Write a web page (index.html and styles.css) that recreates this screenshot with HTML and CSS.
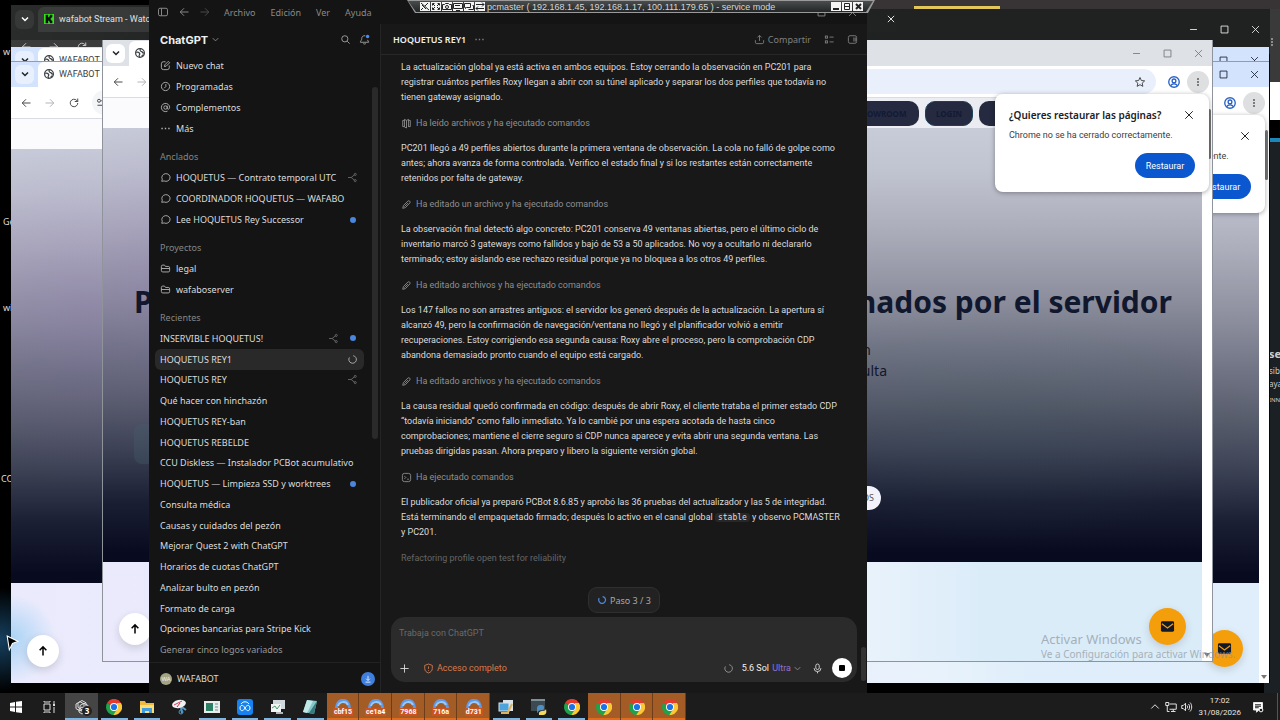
FILE: index.html
```html
<!DOCTYPE html>
<html lang="es">
<head>
    <meta charset="UTF-8">
    <meta name="viewport" content="width=device-width, initial-scale=1.0">
    <title>ChatGPT - HOQUETUS REY1</title>
    <link rel="stylesheet" href="styles.css">
</head>
<body>
    <svg class="sprite" aria-hidden="true">
        <symbol id="chevron" viewBox="0 0 16 16"><path d="M4 6l4 4 4-4"/></symbol>
        <symbol id="back" viewBox="0 0 16 16"><path d="M14 8H3M8 3L3 8l5 5"/></symbol>
        <symbol id="forward" viewBox="0 0 16 16"><path d="M2 8h11M8 3l5 5-5 5"/></symbol>
        <symbol id="reload" viewBox="0 0 16 16"><path d="M13 8a5 5 0 1 1-1.5-3.6L13 6M13 2v4H9"/></symbol>
        <symbol id="tune" viewBox="0 0 16 16"><path d="M7 5h7M2 11h6"/><circle cx="4" cy="5" r="2"/><circle cx="11" cy="11" r="2"/></symbol>
        <symbol id="globe" viewBox="0 0 16 16"><circle cx="8" cy="8" r="7"/><path d="M2 7c2-1 4 0 5 1s1 2 0 3 0 3 1 4M9 1c-2 2-1 3 0 4s3 1 3 2 2 1 3 1M11 14c0-2 1-3 3-3"/></symbol>
        <symbol id="star" viewBox="0 0 16 16"><path d="M8 2l1.8 4 4.4.5-3.3 3 .9 4.3L8 11.600l-3.800 2.200.9-4.300-3.300-3 4.400-.5z"/></symbol>
        <symbol id="person" viewBox="0 0 16 16"><circle cx="8" cy="8" r="7"/><circle cx="8" cy="6.500" r="2.500"/><path d="M3.500 13c1-2 2.700-2.600 4.500-2.600s3.500.6 4.500 2.600"/></symbol>
        <symbol id="kebab" viewBox="0 0 16 16"><path d="M8 3v2M8 7v2M8 11v2" stroke-width="2"/></symbol>
        <symbol id="min" viewBox="0 0 16 16"><path d="M3 8h10"/></symbol>
        <symbol id="max" viewBox="0 0 16 16"><path d="M3 3h10v10H3z"/></symbol>
        <symbol id="close" viewBox="0 0 16 16"><path d="M3 3l10 10M13 3L3 13"/></symbol>
        <symbol id="up" viewBox="0 0 16 16"><path d="M8 14V3M3.500 7L8 2.500 12.500 7"/></symbol>
        <symbol id="mail" viewBox="0 0 16 16"><rect x="1" y="2.500" width="14" height="11" rx="1.500" fill="#111827" stroke="none"/><path d="M2 5l6 4.500L14 5" stroke="#f59e0b"/></symbol>
        <symbol id="panel" viewBox="0 0 16 16"><rect x="2" y="3" width="12" height="10" rx="2"/><path d="M6 3v10"/></symbol>
        <symbol id="panel-right" viewBox="0 0 16 16"><rect x="2" y="2.500" width="12" height="11" rx="2.500"/><path d="M10 5v6M12 5v6"/></symbol>
        <symbol id="search" viewBox="0 0 16 16"><circle cx="7" cy="7" r="4.500"/><path d="M10.500 10.500L14 14"/></symbol>
        <symbol id="bell" viewBox="0 0 16 16"><path d="M9 2.500C6 2 4 4 4 6.500c0 3-2 3.500-2 5.500h12c0-1.500-1.300-2-1.700-3.500M6 13.500c1 1.500 3 1.500 4 0"/><circle cx="12.500" cy="3.500" r="2.500" fill="#4a8cf0" stroke="none"/></symbol>
        <symbol id="compose" viewBox="0 0 16 16"><path d="M8 2.500H5a3 3 0 0 0-3 3V11a3 3 0 0 0 3 3h5.500a3 3 0 0 0 3-3V8M6.500 9.500l.5-2.500 5-5 2 2-5 5z"/></symbol>
        <symbol id="clock" viewBox="0 0 16 16"><circle cx="8" cy="8" r="6"/><path d="M8.500 4.500V8L6 10.500"/></symbol>
        <symbol id="at" viewBox="0 0 16 16"><circle cx="8" cy="8" r="2.500"/><path d="M10.500 5.500V9c0 2 3.500 2 3.500-1A6 6 0 1 0 11 13.200"/></symbol>
        <symbol id="dots" viewBox="0 0 16 16"><path d="M2 8h2M7 8h2M12 8h2" stroke-width="2"/></symbol>
        <symbol id="bubble" viewBox="0 0 16 16"><path d="M2.500 13.500l.8-3A6 5.600 0 1 1 6 13z"/></symbol>
        <symbol id="folder" viewBox="0 0 16 16"><path d="M2 11V5a2 2 0 0 1 2-2h2.500L8 5h4a2 2 0 0 1 2 2v4a2 2 0 0 1-2 2H4a2 2 0 0 1-2-2zM2 8h12"/></symbol>
        <symbol id="branch" viewBox="0 0 16 16"><path d="M1.500 8H6l5-4M6 8l5 4"/><circle cx="12" cy="3.500" r="1.500"/><circle cx="12" cy="12.500" r="1.500"/></symbol>
        <symbol id="spin" viewBox="0 0 16 16"><path d="M9 2.500A5.500 5.500 0 1 1 3.500 5"/></symbol>
        <symbol id="download" viewBox="0 0 16 16"><path d="M8 3v7M5 7.500L8 10.500l3-3M4 13h8"/></symbol>
        <symbol id="share" viewBox="0 0 16 16"><path d="M8 10V2M5 5l3-3 3 3M2 9v3a2 2 0 0 0 2 2h8a2 2 0 0 0 2-2V9"/></symbol>
        <symbol id="list" viewBox="0 0 16 16"><rect x="2" y="3" width="3" height="3"/><rect x="2" y="10" width="3" height="3"/><path d="M8 4.500h6M8 11.500h6"/></symbol>
        <symbol id="book" viewBox="0 0 16 16"><path d="M5 3.500H2.500v9H5M11 3.500h2.500v9H11M5 2l3 1.500v11L5 13zM8 3.500L11 2v11"/></symbol>
        <symbol id="pencil" viewBox="0 0 16 16"><path d="M2.500 13.500l1-4 6.500-6.500c2-1.500 4 .8 3 2.600L6.500 12.500zM5 11l5-5"/></symbol>
        <symbol id="terminal" viewBox="0 0 16 16"><rect x="2" y="2" width="12" height="12" rx="3"/><path d="M5 6l2 2-2 2M9 10.500h2.500"/></symbol>
        <symbol id="shield" viewBox="0 0 16 16"><path d="M8 1.500l5.500 2V8c0 3.500-2.500 5.500-5.500 6.500C5 13.500 2.500 11.500 2.500 8V3.500zM8 5v3.500M8 10.500v1.200"/></symbol>
        <symbol id="plus" viewBox="0 0 16 16"><path d="M8 2v12M2 8h12"/></symbol>
        <symbol id="mic" viewBox="0 0 16 16"><rect x="5.500" y="1.500" width="5" height="8" rx="2.500"/><path d="M3 7.500a5 5 0 0 0 10 0M8 12.500V15"/></symbol>
        <symbol id="chrome" viewBox="0 0 16 16"><g stroke="none"><path d="M8 8L1 4A8 8 0 0 1 15 4z" fill="#e33b2e"/><path d="M1.100 4A8 8 0 0 0 7.500 16L11.500 10 8 8z" fill="#1fa34a"/><path d="M15 4A8 8 0 0 1 7.300 16L11.500 9.500 11 4z" fill="#fcc934"/><circle cx="8" cy="8" r="4" fill="#fff"/><circle cx="8" cy="8" r="3.100" fill="#1a73e8"/></g></symbol>
        <symbol id="arc" viewBox="0 0 16 16"><path d="M1.500 10C1 -1.500 15-1.500 14.500 10" stroke="#5d9bea" stroke-width="3"/><path d="M3 7c1.500-5 8-5 10-1" stroke="#9ccaf8" stroke-width="2"/></symbol>
    </svg>

    <div class="desktop">
        <!-- desktop leftovers on both edges -->
        <div class="desk-left">
            <span>w</span><span>Ge</span><span>wi</span><span>CC</span>
        </div>
        <div class="desk-right">
            <div class="edge-top"><svg class="ic"><use href="#kebab"/></svg></div>
            <div class="edge-bar"></div>
            <div class="edge-text"><b>se</b><span>sible</span><span>aya</span><small>INN</small></div>
        </div>

        <section class="window dark">
            <div class="tabstrip">
                <button class="tab-search" aria-label="Buscar pestañas"><svg class="ic"><use href="#chevron"/></svg></button>
                <div class="tab kick">
                    <svg class="favicon" viewBox="0 0 12 12"><rect width="12" height="12" fill="#35e01b"/><path d="M2 1h3v3h1V3h1V1h3v3H9v1H8v2h1v1h1v3H7V9H6V8H5v3H2z" fill="#07130a"/></svg>
                    <span>wafabot Stream - Watch Live</span>
                    <svg class="ic tab-close"><use href="#close"/></svg>
                </div>
                <div class="controls"><svg class="ic"><use href="#min"/></svg><svg class="ic"><use href="#max"/></svg><svg class="ic"><use href="#close"/></svg></div>
            </div>
            <div class="toolbar">
                <svg class="ic"><use href="#back"/></svg><svg class="ic"><use href="#forward"/></svg><svg class="ic"><use href="#reload"/></svg>
            </div>
        </section>
        <div class="back-strip"></div>

        <section class="window blue behind">
            <div class="tabstrip">
                <button class="tab-search" aria-label="Buscar pestañas"><svg class="ic"><use href="#chevron"/></svg></button>
                <div class="tab"><svg class="ic"><use href="#globe"/></svg><span>WAFABOT —</span></div>
                <div class="controls"><svg class="ic"><use href="#min"/></svg><svg class="ic"><use href="#max"/></svg><svg class="ic"><use href="#close"/></svg></div>
            </div>
        </section>

        <section class="window blue front">
            <div class="tabstrip">
                <button class="tab-search" aria-label="Buscar pestañas"><svg class="ic"><use href="#chevron"/></svg></button>
                <div class="tab"><svg class="ic"><use href="#globe"/></svg><span>WAFABOT —</span></div>
                <div class="controls"><svg class="ic"><use href="#min"/></svg><svg class="ic"><use href="#max"/></svg><svg class="ic"><use href="#close"/></svg></div>
            </div>
            <div class="toolbar">
                <svg class="ic"><use href="#back"/></svg><svg class="ic faint"><use href="#forward"/></svg><svg class="ic"><use href="#reload"/></svg>
                <div class="omnibox"><svg class="ic"><use href="#tune"/></svg><svg class="ic"><use href="#star"/></svg></div>
                <svg class="ic profile"><use href="#person"/></svg>
                <button class="menu-btn" aria-label="Menú"><svg class="ic"><use href="#kebab"/></svg></button>
            </div>
            <div class="viewport">
                <div class="page">
                    <header class="site-nav"></header>
                    <div class="hero"></div>
                    <div class="below glow"></div>
                    <button class="to-top" aria-label="Subir"><svg class="ic"><use href="#up"/></svg></button>
                    <button class="mail-btn" aria-label="Correo"><svg class="ic"><use href="#mail"/></svg></button>
                </div>
                <div class="page-scroll"></div>
            </div>
            <div class="restore">
                <div class="restore-head"><h2>¿Quieres restaurar las páginas?</h2><button aria-label="Cerrar"><svg class="ic"><use href="#close"/></svg></button></div>
                <p>Chrome no se ha cerrado correctamente.</p>
                <button class="restore-btn">Restaurar</button>
            </div>
        </section>

        <section class="window grey">
            <div class="tabstrip">
                <button class="tab-search" aria-label="Buscar pestañas"><svg class="ic"><use href="#chevron"/></svg></button>
                <div class="tab"><svg class="ic"><use href="#globe"/></svg></div>
                <div class="controls"><svg class="ic"><use href="#min"/></svg><svg class="ic"><use href="#max"/></svg><svg class="ic"><use href="#close"/></svg></div>
            </div>
            <div class="toolbar">
                <svg class="ic"><use href="#back"/></svg><svg class="ic faint"><use href="#forward"/></svg><svg class="ic"><use href="#reload"/></svg>
                <div class="omnibox"><svg class="ic"><use href="#tune"/></svg><svg class="ic"><use href="#star"/></svg></div>
                <svg class="ic profile"><use href="#person"/></svg>
                <button class="menu-btn" aria-label="Menú"><svg class="ic"><use href="#kebab"/></svg></button>
            </div>
            <div class="viewport">
                <div class="page">
                    <header class="site-nav">
                        <a href="#">SHOWROOM</a><a href="#" class="login">LOGIN</a><a href="#">REGISTRO</a>
                    </header>
                    <div class="hero">
                        <h1><span>P</span><span>nados por el servidor</span></h1>
                        <p class="lead"><span>n</span><span>ulta</span></p>
                        <div class="hero-actions"><span class="glass"></span><a href="#" class="cta">OS</a></div>
                    </div>
                    <div class="below"></div>
                    <button class="to-top" aria-label="Subir"><svg class="ic"><use href="#up"/></svg></button>
                    <button class="mail-btn" aria-label="Correo"><svg class="ic"><use href="#mail"/></svg></button>
                </div>
                <div class="page-scroll"></div>
            </div>
            <div class="restore">
                <div class="restore-head"><h2>¿Quieres restaurar las páginas?</h2><button aria-label="Cerrar"><svg class="ic"><use href="#close"/></svg></button></div>
                <p>Chrome no se ha cerrado correctamente.</p>
                <button class="restore-btn">Restaurar</button>
            </div>
        </section>

        <!-- ChatGPT desktop app -->
        <main class="window gpt">
            <div class="menubar">
                <svg class="ic"><use href="#panel"/></svg><svg class="ic"><use href="#back"/></svg><svg class="ic dim"><use href="#forward"/></svg>
                <a href="#">Archivo</a><a href="#">Edición</a><a href="#">Ver</a><a href="#">Ayuda</a>
                <div class="controls"><svg class="ic"><use href="#max"/></svg><svg class="ic"><use href="#close"/></svg></div>
            </div>
            <div class="gpt-body">
                <aside class="sidebar">
                    <div class="side-head">
                        <button class="brand">ChatGPT <svg class="ic"><use href="#chevron"/></svg></button>
                        <svg class="ic"><use href="#search"/></svg><svg class="ic"><use href="#bell"/></svg>
                    </div>
                    <nav class="side-list">
                        <a href="#"><svg class="ic"><use href="#compose"/></svg><span>Nuevo chat</span></a>
                        <a href="#"><svg class="ic"><use href="#clock"/></svg><span>Programadas</span></a>
                        <a href="#"><svg class="ic"><use href="#at"/></svg><span>Complementos</span></a>
                        <a href="#"><svg class="ic"><use href="#dots"/></svg><span>Más</span></a>
                    </nav>
                    <h3>Anclados</h3>
                    <nav class="side-list">
                        <a href="#"><svg class="ic"><use href="#bubble"/></svg><span>HOQUETUS — Contrato temporal UTC</span><svg class="ic mark"><use href="#branch"/></svg></a>
                        <a href="#"><svg class="ic"><use href="#bubble"/></svg><span>COORDINADOR HOQUETUS — WAFABO</span></a>
                        <a href="#"><svg class="ic"><use href="#bubble"/></svg><span>Lee HOQUETUS Rey Successor</span><i class="dot"></i></a>
                    </nav>
                    <h3>Proyectos</h3>
                    <nav class="side-list">
                        <a href="#"><svg class="ic"><use href="#folder"/></svg><span>legal</span></a>
                        <a href="#"><svg class="ic"><use href="#folder"/></svg><span>wafaboserver</span></a>
                    </nav>
                    <h3>Recientes</h3>
                    <nav class="side-list recents">
                        <a href="#"><span>INSERVIBLE HOQUETUS!</span><svg class="ic mark"><use href="#branch"/></svg><i class="dot"></i></a>
                        <a href="#" class="active"><span>HOQUETUS REY1</span><svg class="ic spin"><use href="#spin"/></svg></a>
                        <a href="#"><span>HOQUETUS REY</span><svg class="ic mark"><use href="#branch"/></svg></a>
                        <a href="#"><span>Qué hacer con hinchazón</span></a>
                        <a href="#"><span>HOQUETUS REY-ban</span></a>
                        <a href="#"><span>HOQUETUS REBELDE</span></a>
                        <a href="#"><span>CCU Diskless — Instalador PCBot acumulativo</span></a>
                        <a href="#"><span>HOQUETUS — Limpieza SSD y worktrees</span><i class="dot"></i></a>
                        <a href="#"><span>Consulta médica</span></a>
                        <a href="#"><span>Causas y cuidados del pezón</span></a>
                        <a href="#"><span>Mejorar Quest 2 with ChatGPT</span></a>
                        <a href="#"><span>Horarios de cuotas ChatGPT</span></a>
                        <a href="#"><span>Analizar bulto en pezón</span></a>
                        <a href="#"><span>Formato de carga</span></a>
                        <a href="#"><span>Opciones bancarias para Stripe Kick</span></a>
                        <a href="#" class="fade"><span>Generar cinco logos variados</span></a>
                    </nav>
                    <div class="account">
                        <span class="avatar">WA</span><span class="user">WAFABOT</span>
                        <button class="update" aria-label="Actualizar"><svg class="ic"><use href="#download"/></svg></button>
                    </div>
                    <div class="side-scroll"></div>
                </aside>

                <section class="chat">
                    <header class="chat-head">
                        <h2>HOQUETUS REY1</h2><svg class="ic"><use href="#dots"/></svg>
                        <button class="share"><svg class="ic"><use href="#share"/></svg>Compartir</button>
                        <svg class="ic"><use href="#list"/></svg><svg class="ic"><use href="#panel-right"/></svg>
                    </header>
                    <div class="messages">
                        <p>La actualización global ya está activa en ambos equipos. Estoy cerrando la observación en PC201 para<br>registrar cuántos perfiles Roxy llegan a abrir con su túnel aplicado y separar los dos perfiles que todavía no<br>tienen gateway asignado.</p>
                        <div class="step"><svg class="ic"><use href="#book"/></svg>Ha leído archivos y ha ejecutado comandos</div>
                        <p>PC201 llegó a 49 perfiles abiertos durante la primera ventana de observación. La cola no falló de golpe como<br>antes; ahora avanza de forma controlada. Verifico el estado final y si los restantes están correctamente<br>retenidos por falta de gateway.</p>
                        <div class="step"><svg class="ic"><use href="#pencil"/></svg>Ha editado un archivo y ha ejecutado comandos</div>
                        <p>La observación final detectó algo concreto: PC201 conserva 49 ventanas abiertas, pero el último ciclo de<br>inventario marcó 3 gateways como fallidos y bajó de 53 a 50 aplicados. No voy a ocultarlo ni declararlo<br>terminado; estoy aislando ese rechazo residual porque ya no bloquea a los otros 49 perfiles.</p>
                        <div class="step"><svg class="ic"><use href="#pencil"/></svg>Ha editado archivos y ha ejecutado comandos</div>
                        <p>Los 147 fallos no son arrastres antiguos: el servidor los generó después de la actualización. La apertura sí<br>alcanzó 49, pero la confirmación de navegación/ventana no llegó y el planificador volvió a emitir<br>recuperaciones. Estoy corrigiendo esa segunda causa: Roxy abre el proceso, pero la comprobación CDP<br>abandona demasiado pronto cuando el equipo está cargado.</p>
                        <div class="step"><svg class="ic"><use href="#pencil"/></svg>Ha editado archivos y ha ejecutado comandos</div>
                        <p>La causa residual quedó confirmada en código: después de abrir Roxy, el cliente trataba el primer estado CDP<br>“todavía iniciando” como fallo inmediato. Ya lo cambié por una espera acotada de hasta cinco<br>comprobaciones; mantiene el cierre seguro si CDP nunca aparece y evita abrir una segunda ventana. Las<br>pruebas dirigidas pasan. Ahora preparo y libero la siguiente versión global.</p>
                        <div class="step"><svg class="ic"><use href="#terminal"/></svg>Ha ejecutado comandos</div>
                        <p>El publicador oficial ya preparó PCBot 8.6.85 y aprobó las 36 pruebas del actualizador y las 5 de integridad.<br>Está terminando el empaquetado firmado; después lo activo en el canal global <code>stable</code> y observo PCMASTER<br>y PC201.</p>
                        <div class="step thinking">Refactoring profile open test for reliability</div>
                    </div>
                    <button class="progress"><svg class="ic"><use href="#spin"/></svg>Paso 3 / 3</button>
                    <form class="composer">
                        <textarea rows="1" aria-label="Mensaje" placeholder="Trabaja con ChatGPT"></textarea>
                        <div class="composer-row">
                            <button type="button" aria-label="Adjuntar"><svg class="ic"><use href="#plus"/></svg></button>
                            <button type="button" class="access"><svg class="ic"><use href="#shield"/></svg>Acceso completo</button>
                            <svg class="ic ring"><use href="#spin"/></svg>
                            <button type="button" class="model">5.6 Sol <em>Ultra</em><svg class="ic"><use href="#chevron"/></svg></button>
                            <button type="button" aria-label="Dictar"><svg class="ic"><use href="#mic"/></svg></button>
                            <button type="button" class="stop" aria-label="Detener"><i></i></button>
                        </div>
                    </form>
                    <div class="chat-scroll"></div>
                </section>
            </div>
        </main>

        <!-- remote session bar -->
        <div class="remote">
            <div class="remote-inner">
                <div class="remote-tools">
                    <button aria-label="Soltar"><svg class="ic" viewBox="0 0 10 9"><path d="M1 1l8 7M8 1L5 4M2 3l4 4M1 8l2-2"/></svg></button>
                    <button aria-label="Pantalla completa"><svg class="ic" viewBox="0 0 10 9"><path d="M1.500 3.500v-2h2M6.500 1.500h2v2M8.500 5.500v2h-2M3.500 7.500h-2v-2M2 2l2 2M8 2L6 4M2 7l2-2M8 7L6 5"/></svg></button>
                    <button aria-label="Captura"><svg class="ic" viewBox="0 0 10 9"><path d="M.5 2.500h2l1-1h3l1 1h2v5h-9z"/><circle cx="5" cy="5" r="1.500"/></svg></button>
                    <button aria-label="Monitor"><svg class="ic" viewBox="0 0 10 9"><path d="M.5 1.500h9v5h-9zM3 8.500h4M2 3.500h5"/></svg></button>
                    <button aria-label="Chat"><svg class="ic" viewBox="0 0 10 9"><path d="M.5 1.500h6v4h-4l-1 1v-1h-1zM8.500 3.500h1v4h-5"/></svg></button>
                    <button aria-label="Cambiar"><svg class="ic" viewBox="0 0 10 9"><path d="M1 2.500h8M7 .5l2 2-2 2M9 6.500H1M3 4.500l-2 2 2 2"/></svg></button>
                </div>
                <span>pcmaster ( 192.168.1.45, 192.168.1.17, 100.111.179.65 ) - service mode</span>
                <div class="remote-tools end">
                    <button aria-label="Minimizar"><svg class="ic" viewBox="0 0 10 9"><path d="M2 7h6" stroke-width="2"/></svg></button>
                    <button aria-label="Restaurar"><svg class="ic" viewBox="0 0 10 9"><path d="M2.500 1.500h5v6h-5zM2 4.500h6"/></svg></button>
                    <button aria-label="Cerrar"><svg class="ic" viewBox="0 0 10 9"><path d="M3 2l5 5M8 2L3 7" stroke-width="2"/></svg></button>
                </div>
            </div>
        </div>

        <div class="watermark"><strong>Activar Windows</strong><span>Ve a Configuración para activar Windows.</span></div>
        <svg class="cursor" viewBox="0 0 12 16"><path d="M1 1l10 5-5 2-3 6z" fill="#000" stroke="#fff"/></svg>
    </div>

    <footer class="taskbar">
        <div class="tasks">
            <button aria-label="Inicio"><svg viewBox="0 0 16 16"><path d="M2 4l5-1v4.500H2zM8 2.800L14 2v5.500H8zM2 8.500h5V13l-5-1zM8 8.500h6V14l-6-.8z" fill="#fff"/></svg></button>
            <button aria-label="Vista de tareas"><svg class="line" viewBox="0 0 16 16"><path d="M3 5h6v6H3zM3 2v1h6V2M3 14v-1h6v1M13 2v3M13 8v6"/><path d="M12 6h2" stroke-width="2"/></svg></button>
            <button class="lit open" aria-label="ChatGPT"><svg class="line" viewBox="0 0 16 16"><path d="M8 1.500l4 2.300v4.600L8 10.700 4 8.400V3.800zM2 5l4-2.300 4 2.300v4.600l-4 2.300-4-2.300zM6 6.500l4-2.300 4 2.300V11l-4 2.300L6 11zM5 10l3-2 3 2v3l-3 2-3-2z"/></svg><b class="badge">3</b></button>
            <button class="open" aria-label="Chrome"><svg><use href="#chrome"/></svg></button>
            <button class="open" aria-label="Explorador"><svg viewBox="0 0 16 16"><path d="M1 2h5l1 2h8v10H1z" fill="#f0b83c"/><path d="M1 6h14v8H1z" fill="#fcdd7a"/><path d="M3 9h10v5h-3v-2H6v2H3z" fill="#3f9de0"/></svg></button>
            <button aria-label="Recortes"><svg viewBox="0 0 16 16"><path d="M7 6l7 5M9 8l1 6" stroke="#5f9ac4" stroke-width="2"/><ellipse cx="7" cy="5" rx="7" ry="4" transform="rotate(-12 7 5)" fill="#eef0f4"/><path d="M2 6l8-4" stroke="#d23b58"/><path d="M5 8l3-4" stroke="#c33"/><circle cx="9" cy="13" r="2" stroke="#4a94c8"/></svg></button>
            <button class="open" aria-label="Monitor"><svg viewBox="0 0 16 16"><rect y="2" width="16" height="12" fill="#e8eceb"/><rect x="2" y="4" width="7" height="8" fill="#2c7f64"/><path d="M11 5h3M11 8h3M11 11h3" stroke="#6b8f98"/></svg></button>
            <button class="open" aria-label="Bucle"><svg viewBox="0 0 16 16"><rect width="16" height="16" rx="3" fill="#1582f0"/><path d="M8 9c-2 4-5 3-5 0s3-4 5 0 5 3 5 0-3-4-5 0M4 5c2-3 6-3 8 0" fill="none" stroke="#fff"/></svg></button>
            <button class="open" aria-label="Equipos"><svg viewBox="0 0 16 16"><rect x="3" y="1" width="12" height="9" fill="#cfd8dc"/><rect x="1" y="5" width="10" height="8" fill="#f1f5f6"/><path d="M2 9l3-2 2 3 3-4" fill="none" stroke="#4f9c6a"/><path d="M6 13h7v2H6z" fill="#aeb8bc"/></svg></button>
            <button class="open" aria-label="Bloc de notas"><svg viewBox="0 0 16 16"><path d="M5 1l10 1-3 13-11-2z" fill="#84c7ca"/><path d="M5 1l6 1-6 12-4-1z" fill="#c1e8e6"/><path d="M15 2l-3 13-5-1z" fill="#397a80"/></svg></button>
            <button class="hot" aria-label="cbf15"><svg><use href="#arc"/></svg><span>cbf15</span></button>
            <button class="hot" aria-label="ce1a4"><svg><use href="#arc"/></svg><span>ce1a4</span></button>
            <button class="hot" aria-label="7968"><svg><use href="#arc"/></svg><span>7968</span></button>
            <button class="hot" aria-label="716a"><svg><use href="#arc"/></svg><span>716a</span></button>
            <button class="hot" aria-label="d731"><svg><use href="#arc"/></svg><span>d731</span></button>
            <button class="open" aria-label="Escritorio remoto"><svg viewBox="0 0 16 16"><rect x="5" y="1" width="10" height="11" fill="#dbe3e8"/><rect x="1" y="4" width="10" height="8" fill="#4da3dc" stroke="#cfe6f5"/><path d="M3 14h8M14 5l-4 8" stroke="#dcb35e" stroke-width="2"/></svg></button>
            <button class="open" aria-label="Python"><svg viewBox="0 0 16 16"><rect width="14" height="12" fill="#3c4a52"/><path d="M0 1h14" stroke="#7f929c" stroke-width="2"/><path d="M6 10c0-3 1-4 4-4s3 1 3 3-1 2-3 2-3 1-3 3c-1 0-1-2-1-4z" fill="#4f8fc6"/><path d="M15 10c1 4 0 6-4 6s-3-1-3-2 1-2 3-2 3 0 4-2z" fill="#f6d95a"/></svg></button>
            <button class="open" aria-label="Chrome"><svg><use href="#chrome"/></svg></button>
            <button class="hot" aria-label="Chrome"><svg><use href="#chrome"/></svg></button>
            <button class="hot" aria-label="Chrome"><svg><use href="#chrome"/></svg></button>
            <button class="hot" aria-label="Chrome"><svg><use href="#chrome"/></svg></button>
        </div>
        <div class="tray">
            <svg class="ic" viewBox="0 0 16 16"><path d="M3 10l5-5 5 5"/></svg>
            <svg class="ic" viewBox="0 0 16 16"><path d="M6 4h9v7H6M8 14h6M11 11v3M1 2h4v4H1zM3 6v8h3"/></svg>
            <svg class="ic" viewBox="0 0 16 16"><path d="M1 6h2l3-3v10l-3-3H1zM8 6c1 1 1 3 0 4M10 4c2 2 2 6 0 8M12 2c3 3 3 9 0 12"/></svg>
            <div class="time"><span>17:02</span><span>31/08/2026</span></div>
            <svg class="ic notes" viewBox="0 0 16 16"><path d="M2 2h12v10H9l-3 3v-3H2z" fill="#fff"/><path d="M4 5h8M4 7h8M4 9h5" stroke="#1c1c1c"/><circle cx="12" cy="12" r="2.500" fill="#1c1c1c" stroke="#fff"/></svg>
        </div>
    </footer>
</body>
</html>
```
FILE: styles.css
```css
* {
    margin: 0;
    padding: 0;
    box-sizing: border-box;
}

body {
    font-family: 'Noto Sans', 'Open Sans', sans-serif;
    font-size: 9px;
    height: 100vh;
    display: flex;
    flex-direction: column;
    background: #000;
    overflow: hidden;
}

button {
    font: inherit;
    color: inherit;
    background: none;
    border: none;
    display: flex;
    align-items: center;
    justify-content: center;
}

a {
    color: inherit;
    text-decoration: none;
}

.sprite {
    position: absolute;
    width: 0;
    height: 0;
}

.ic {
    width: 12px;
    height: 12px;
    flex: none;
    fill: none;
    stroke: currentColor;
    stroke-width: 1.3;
}

/* Desktop */
.desktop {
    flex: 1;
    position: relative;
    overflow: hidden;
}

.desk-left {
    position: absolute;
    inset: 0 auto 0 0;
    width: 11px;
    color: #ddd;
    overflow: hidden;
    background: radial-gradient(circle at 0 640px, #16405f 0, #000 52px);
}

.desk-left span {
    position: absolute;
    left: 3px;
    top: 45px;
}

.desk-left span:nth-child(2) { top: 215px; }
.desk-left span:nth-child(3) { top: 301px; }
.desk-left span:nth-child(4) { top: 472px; left: 1px; }

.back-strip {
    position: absolute;
    inset: 0 0 auto 60%;
    height: 9px;
    background: #383436;
}

.back-strip::after {
    content: "";
    position: absolute;
    left: 146px;
    top: 6px;
    width: 86px;
    height: 3px;
    background: #e3c65a;
}

.desk-right {
    position: absolute;
    inset: 0 0 0 auto;
    width: 16px;
    padding-left: 5px;
    color: #ccc;
    background: #1a2024;
    overflow: hidden;
}

.edge-top {
    height: 82px;
    margin-left: -5px;
    padding: 36px 0 0 2px;
    background: #3a3a3a;
}

.edge-bar {
    height: 60px;
    margin-left: -5px;
    background: linear-gradient(#fff 38px, #000 38px, #000 56px, #1c86b8 56px);
}

.edge-text {
    padding-top: 202px;
    display: flex;
    flex-direction: column;
    font-size: 8px;
    line-height: 13px;
}

.edge-text b {
    font-size: 11px;
    line-height: 20px;
}

.edge-text small {
    font-size: 6px;
    line-height: 20px;
}

.watermark {
    position: absolute;
    right: 54px;
    bottom: 31px;
    width: 185px;
    display: flex;
    flex-direction: column;
    color: #8e979f;
    opacity: 0.7;
    font-size: 10px;
    line-height: 15px;
    white-space: nowrap;
}

.watermark strong {
    font-size: 13px;
    font-weight: 400;
    line-height: 16px;
}

.cursor {
    position: absolute;
    left: 6px;
    top: 635px;
    width: 13px;
    height: 17px;
}

/* Browser windows */
.window {
    position: absolute;
    display: flex;
    flex-direction: column;
    overflow: hidden;
}

.window.dark {
    inset: 5px 10px 10px 11px;
    color: #e6e6e6;
    background: #050710;
}

.window.behind {
    inset: 47px 11px 10px 11px;
}

.window.front {
    inset: 61px 11px 10px 11px;
    border-top: 1px solid #8d9bb8;
}

.window.grey {
    inset: 40px 67px 31px 102px;
    border: solid #8f939b;
    border-width: 0 1px 1px;
}

.tabstrip {
    height: 26px;
    padding: 0 9px 0 4px;
    display: flex;
    align-items: center;
    gap: 4px;
}

.blue .tabstrip { background: #d3e3fd; }
.front .tabstrip { height: 25px; padding-bottom: 1px; }
.grey .tabstrip { background: #dee2e6; padding: 0 8px 0 3px; }

.dark .tabstrip {
    height: 35px;
    padding-bottom: 7px;
    background: linear-gradient(90deg, #2a2b2b, #202222 20%);
}

.dark .controls {
    padding-top: 20px;
}

.tab-search {
    width: 19px;
    height: 19px;
    border-radius: 6px;
    background: #fff;
    color: #1f2328;
}

.blue .tab-search { background: #e8f0fe; }

.dark .tab-search {
    background: #363838;
    color: #fff;
}

.tab-search .ic { stroke-width: 2; }

.tab {
    height: 25px;
    width: 140px;
    padding: 0 6px;
    display: flex;
    align-items: center;
    gap: 5px;
    background: #fff;
    color: #3c4043;
    border-radius: 6px 6px 0 0;
    white-space: nowrap;
    overflow: hidden;
    font-family: Roboto, sans-serif;
}

.tab .ic {
    width: 10px;
    height: 10px;
    stroke-width: 2;
}

.tab.kick {
    width: 868px;
    background: linear-gradient(90deg, #3a3b3b, #202222);
    color: #e0e0e0;
}

.favicon {
    width: 10px;
    height: 10px;
}

.tab .tab-close { margin: 0 4px 0 auto; stroke-width: 1.6; }

.controls {
    margin-left: auto;
    display: flex;
    gap: 20px;
}

.controls .ic { width: 11px; height: 11px; }
.grey .controls { color: #777c82; }
.blue .controls { color: #1f2937; }

.toolbar {
    height: 31px;
    padding: 0 3px 0 9px;
    display: flex;
    align-items: center;
    gap: 12px;
    color: #444746;
    background: #fff;
}

.front .toolbar { padding-right: 4px; }
.toolbar .faint { color: #b0b3b8; }

.dark .toolbar {
    background: linear-gradient(90deg, #3c3c3c 894px, #202222 894px);
    color: #ccc;
    height: 14px;
    padding-left: 9px;
    gap: 16px;
}

.omnibox {
    flex: 1;
    height: 25px;
    padding: 0 10px 0 4px;
    display: flex;
    align-items: center;
    justify-content: space-between;
    border-radius: 13px;
    background: #e9f0fb;
}

.blue .omnibox { background: #f4f5f7; }
.toolbar .profile { color: #2c63c4; stroke-width: 1.8; }

.menu-btn {
    width: 22px;
    height: 22px;
    margin-left: -5px;
    border-radius: 50%;
    background: #dedfe1;
    color: #333;
}

.viewport {
    flex: 1;
    display: flex;
}

.page {
    flex: 1;
    position: relative;
    display: flex;
    flex-direction: column;
}

.page-scroll {
    width: 10px;
    background: #fff;
}

.page-scroll::before {
    content: "";
    display: block;
    width: 3px;
    height: 50px;
    margin: 12px 0 0 6px;
    border-radius: 2px;
    background: #777;
}

.page-scroll::after {
    content: "";
    position: absolute;
    right: 2px;
    bottom: 4px;
    border: 3px solid transparent;
    border-top: 4px solid #777;
    border-bottom: 0;
}

.site-nav {
    height: 31px;
    padding-right: 148px;
    display: flex;
    align-items: center;
    justify-content: flex-end;
    gap: 6px;
    background: #fbfbfd;
    border-top: 1px solid #dadce3;
}

.grey .site-nav { background: linear-gradient(90deg, #fbfbfd 40%, #e2e4ec); }

.site-nav a {
    width: 75px;
    height: 25px;
    border-radius: 10px;
    background: #252a40;
    color: #121a33;
    font-size: 8px;
    font-weight: 700;
    line-height: 25px;
    text-align: center;
}

.site-nav .login {
    width: 48px;
    border: 1px solid #1c4258;
    line-height: 23px;
}

.hero {
    height: 434px;
    padding: 153px 30px 0 31px;
    color: #11172d;
    background:
        radial-gradient(ellipse 240px 120px at 82% 68%, rgba(50, 90, 90, 0.15), transparent),
        radial-gradient(ellipse 200px 180px at 6% 36%, rgba(130, 90, 180, 0.2), transparent),
        linear-gradient(#c8ccd8 0%, #c0c3d0 10%, #adaebc 23%, #8b8d9c 40%, #707484 51%, #575b6b 63%, #3c4154 74%, #1b1f34 86%, #080b20 98%);
}

.hero h1 {
    display: flex;
    justify-content: space-between;
    font-size: 30px;
    line-height: 42px;
}

.lead {
    width: 753px;
    padding-top: 16px;
    display: flex;
    flex-direction: column;
    align-items: flex-end;
    font-size: 14px;
    line-height: 21px;
}

.lead span:first-child { padding-right: 16px; }

.hero-actions {
    width: 747px;
    padding-top: 43px;
    display: flex;
    justify-content: space-between;
}

.glass {
    width: 60px;
    height: 40px;
    border-radius: 8px;
    background: rgba(70, 95, 105, 0.35);
}

.cta {
    width: 80px;
    height: 24px;
    margin-top: 62px;
    padding-right: 7px;
    border-radius: 12px;
    background: #f1f2fa;
    color: #555;
    line-height: 24px;
    text-align: right;
}

.below {
    flex: 1;
    background: linear-gradient(90deg, #eaeafc, #e8f2fb 70%, #dbecf9 80%);
}

.below.glow {
    background: radial-gradient(circle at 0 56px, #a9d3f5, transparent 44px), linear-gradient(90deg, #eaeafc, #e8f2fb 74%, #dfeefa 82%);
}

.to-top,
.mail-btn {
    position: absolute;
    bottom: 16px;
    border-radius: 50%;
}

.to-top {
    left: 16px;
    width: 32px;
    height: 32px;
    background: #fff;
    color: #000;
    box-shadow: 0 3px 8px rgba(0, 0, 0, 0.15);
}

.to-top .ic { stroke-width: 2; }

.mail-btn {
    right: 16px;
    width: 37px;
    height: 37px;
    background: #f59e0b;
    box-shadow: 0 3px 8px rgba(0, 0, 0, 0.15);
}

.mail-btn .ic { width: 15px; height: 15px; }

.restore {
    position: absolute;
    top: 54px;
    right: 3px;
    width: 214px;
    padding: 14px;
    display: flex;
    flex-direction: column;
    background: #fff;
    color: #202124;
    border-radius: 8px;
    box-shadow: 0 1px 5px rgba(0, 0, 0, 0.35);
    font-family: Roboto, sans-serif;
}

.front .restore { top: 53px; right: 4px; }

.restore-head {
    display: flex;
    justify-content: space-between;
    align-items: center;
}

.restore h2 {
    font: 600 10px/14px 'Noto Sans', sans-serif;
}

.front .restore h2 { font-family: Roboto, sans-serif; }

.restore p {
    padding-top: 6px;
    line-height: 15px;
    color: #3c4043;
}

.restore-btn {
    align-self: flex-end;
    width: 60px;
    height: 25px;
    margin-top: 10px;
    border-radius: 13px;
    background: #0b57d0;
    color: #fff;
}

/* ChatGPT window */
.window.gpt {
    inset: 0 413px 0 149px;
    background: #141414;
    color: #dcdcdc;
}

.menubar {
    height: 24px;
    padding: 0 9px 0 8px;
    display: flex;
    align-items: center;
    gap: 9px;
    color: #8a8a8a;
}

.menubar a { margin-right: 6px; }
.menubar a:first-of-type { margin-left: 4px; }
.menubar .dim { color: #4a4a4a; }

.gpt-body {
    flex: 1;
    display: flex;
    min-height: 0;
}

.sidebar {
    width: 232px;
    flex: none;
    position: relative;
    display: flex;
    flex-direction: column;
    border-right: 1px solid #242424;
}

.side-head {
    height: 31px;
    padding: 0 10px 0 11px;
    display: flex;
    align-items: center;
    gap: 8px;
    color: #a5a5a5;
}

.brand {
    margin-right: auto;
    gap: 2px;
    font: 700 11px Inter, sans-serif;
    color: #f0f0f0;
}

.brand .ic { color: #8d8d8d; }
.side-head .ic { width: 11px; height: 11px; }

.side-list {
    padding: 0 16px 0 6px;
    display: flex;
    flex-direction: column;
}

.side-list a {
    height: 21px;
    padding: 0 6px 0 5px;
    display: flex;
    align-items: center;
    gap: 5px;
    border-radius: 6px;
    white-space: nowrap;
}

.side-list span {
    flex: 1;
}

.side-list .ic { width: 11px; height: 11px; color: #b5b5b5; }
.side-list .mark { color: #6c6c6c; }
.side-list .mark + .dot { margin-left: 6px; }

.side-list .active { background: #292929; }
.side-list .fade { color: #979797; }

.dot {
    width: 6px;
    height: 6px;
    margin-right: 2px;
    border-radius: 50%;
    background: #4a86dc;
}

.sidebar h3 {
    height: 28px;
    padding: 8px 0 0 11px;
    font-size: 9px;
    font-weight: 400;
    line-height: 20px;
    color: #858585;
}

.recents {
    flex: 1;
}

.recents a {
    height: auto;
    flex: 1;
}

.account {
    height: 33px;
    padding: 4px 5px 0 11px;
    display: flex;
    align-items: center;
    gap: 5px;
    background: linear-gradient(transparent 2px, #222 2px, #222 3px, transparent 3px);
}

.avatar {
    width: 12px;
    height: 12px;
    border-radius: 50%;
    background: #a3a584;
    color: #eee;
    font-size: 6px;
    line-height: 12px;
    text-align: center;
}

.user { flex: 1; }

.update {
    width: 14px;
    height: 14px;
    border-radius: 50%;
    background: #3f7fe0;
    color: #fff;
}

.update .ic { width: 10px; height: 10px; }

.side-scroll,
.chat-scroll {
    position: absolute;
    right: 2px;
    top: 63px;
    bottom: 254px;
    width: 6px;
    border-radius: 3px;
    background: #2a2a2a;
}

.chat-scroll {
    top: auto;
    bottom: 12px;
    height: 34px;
    right: 1px;
    width: 5px;
    background: #333;
}

.chat {
    flex: 1;
    min-width: 0;
    position: relative;
    display: flex;
    flex-direction: column;
    background: #181818;
    font-family: Roboto, sans-serif;
}

.chat-head {
    height: 31px;
    padding: 0 9px 0 12px;
    display: flex;
    align-items: center;
    gap: 8px;
    color: #808080;
    border-bottom: 1px solid #282828;
    font-family: 'Noto Sans', sans-serif;
}

.chat-head h2 {
    font-size: 9px;
    font-weight: 600;
    color: #f0f0f0;
}

.chat-head .ic { width: 11px; height: 11px; }

.share {
    margin-left: auto;
    gap: 3px;
    margin-right: 5px;
}

.share + .ic { margin-right: 4px; }

.messages {
    flex: 1;
    min-height: 0;
    padding: 5px 10px 0 20px;
    line-height: 15px;
    white-space: nowrap;
}

.messages code {
    padding: 0 3px;
    font-family: 'DejaVu Sans Mono', monospace;
    font-size: 8px;
    border-radius: 3px;
    background: #272727;
}

.step {
    height: 15px;
    margin: 11px 0 10px;
    display: flex;
    align-items: center;
    gap: 4px;
    color: #8f8f8f;
}

.step .ic { width: 11px; height: 11px; }
.thinking { color: #656565; }

.progress {
    align-self: center;
    height: 26px;
    padding: 0 8px;
    margin-bottom: 4px;
    gap: 3px;
    border: 1px solid #2f2f2f;
    border-radius: 9px;
    background: #222;
    color: #a8a8a8;
    font-family: 'Noto Sans', sans-serif;
}

.progress .ic { width: 10px; height: 10px; color: #4a86dc; stroke-width: 2; }

.composer {
    margin: 0 10px 11px;
    padding: 8px 5px 4px 8px;
    border-radius: 14px;
    background: #2b2b2b;
}

.composer textarea {
    display: block;
    width: 100%;
    height: 16px;
    font: inherit;
    line-height: 16px;
    color: #ddd;
    background: none;
    border: none;
    resize: none;
    outline: none;
    overflow: hidden;
}

.composer textarea::placeholder { color: #6a6a6a; }

.composer-row {
    padding-top: 17px;
    display: flex;
    align-items: center;
    gap: 13px;
}

.access {
    gap: 3px;
    color: #d97a4a;
}

.composer-row .ic { width: 11px; height: 11px; }

.composer-row .ring {
    margin-left: auto;
    margin-right: -5px;
    color: #999;
}

.model {
    gap: 1px;
    margin-right: -4px;
    color: #f0f0f0;
    white-space: pre;
}

.model em {
    font-style: normal;
    color: #8e72d8;
}

.model .ic { color: #8d8d8d; }

.stop {
    width: 20px;
    height: 20px;
    margin-left: -4px;
    border-radius: 50%;
    background: #fff;
}

.stop i {
    width: 6px;
    height: 6px;
    border-radius: 1px;
    background: #000;
}

/* Remote session bar */
.remote {
    position: absolute;
    top: 0;
    left: 407px;
    right: 405px;
    padding: 1px 2px 1px 1px;
    background: #9a9a9a;
    clip-path: polygon(0 0, 100% 0, calc(100% - 7px) 100%, 8px 100%);
}

.remote-inner {
    height: 11px;
    padding: 0 10px 0 12px;
    display: flex;
    align-items: center;
    gap: 2px;
    background: linear-gradient(#4a4d4d, #232626);
    clip-path: polygon(0 0, 100% 0, calc(100% - 7px) 100%, 8px 100%);
    font: 9px 'Liberation Sans', sans-serif;
    color: #d5d5d5;
    white-space: nowrap;
}

.remote-tools {
    display: flex;
    gap: 1px;
}

.remote-tools.end {
    margin-left: auto;
}

.remote-tools button {
    width: 10px;
    height: 9px;
    background: #f4f4f4;
    color: #222;
}

.remote-tools .ic {
    width: 10px;
    height: 9px;
    stroke-width: 1;
}

/* Taskbar */
.taskbar {
    height: 27px;
    display: flex;
    justify-content: space-between;
    background: #1c1c1c;
}

.tasks {
    flex: 1;
    max-width: 686px;
    display: flex;
}

.tasks button {
    flex: 1;
    min-width: 0;
    position: relative;
}

.tasks svg {
    width: 16px;
    height: 16px;
    fill: none;
}

.tasks .line {
    stroke: #ddd;
    stroke-width: 1;
}

.tasks .lit { background: #454545; }

.tasks .open::after {
    content: "";
    position: absolute;
    inset: auto 3px 0;
    height: 2px;
    background: #78b6e4;
}

.tasks .lit::after { inset: auto 0 0; }

.tasks .hot {
    background: #a35c26;
    box-shadow: inset -1px 0 #6e3d18, inset 0 -2px #e36a17;
}

.hot span {
    position: absolute;
    bottom: 4px;
    padding: 0 1px;
    background: #c9541f;
    color: #fff;
    font: 700 7px/8px Roboto, sans-serif;
}

.badge {
    position: absolute;
    right: 6px;
    bottom: 4px;
    width: 10px;
    height: 10px;
    border-radius: 50%;
    background: #222;
    color: #fff;
    font-size: 8px;
    line-height: 10px;
}

.tray {
    padding-right: 13px;
    display: flex;
    align-items: center;
    gap: 4px;
    color: #e6e6e6;
    border-right: 1px solid #555;
    margin-right: 2px;
}

.time {
    display: flex;
    flex-direction: column;
    align-items: center;
    padding: 0 7px 0 1px;
    font: 8px/12px Roboto, sans-serif;
}
```
